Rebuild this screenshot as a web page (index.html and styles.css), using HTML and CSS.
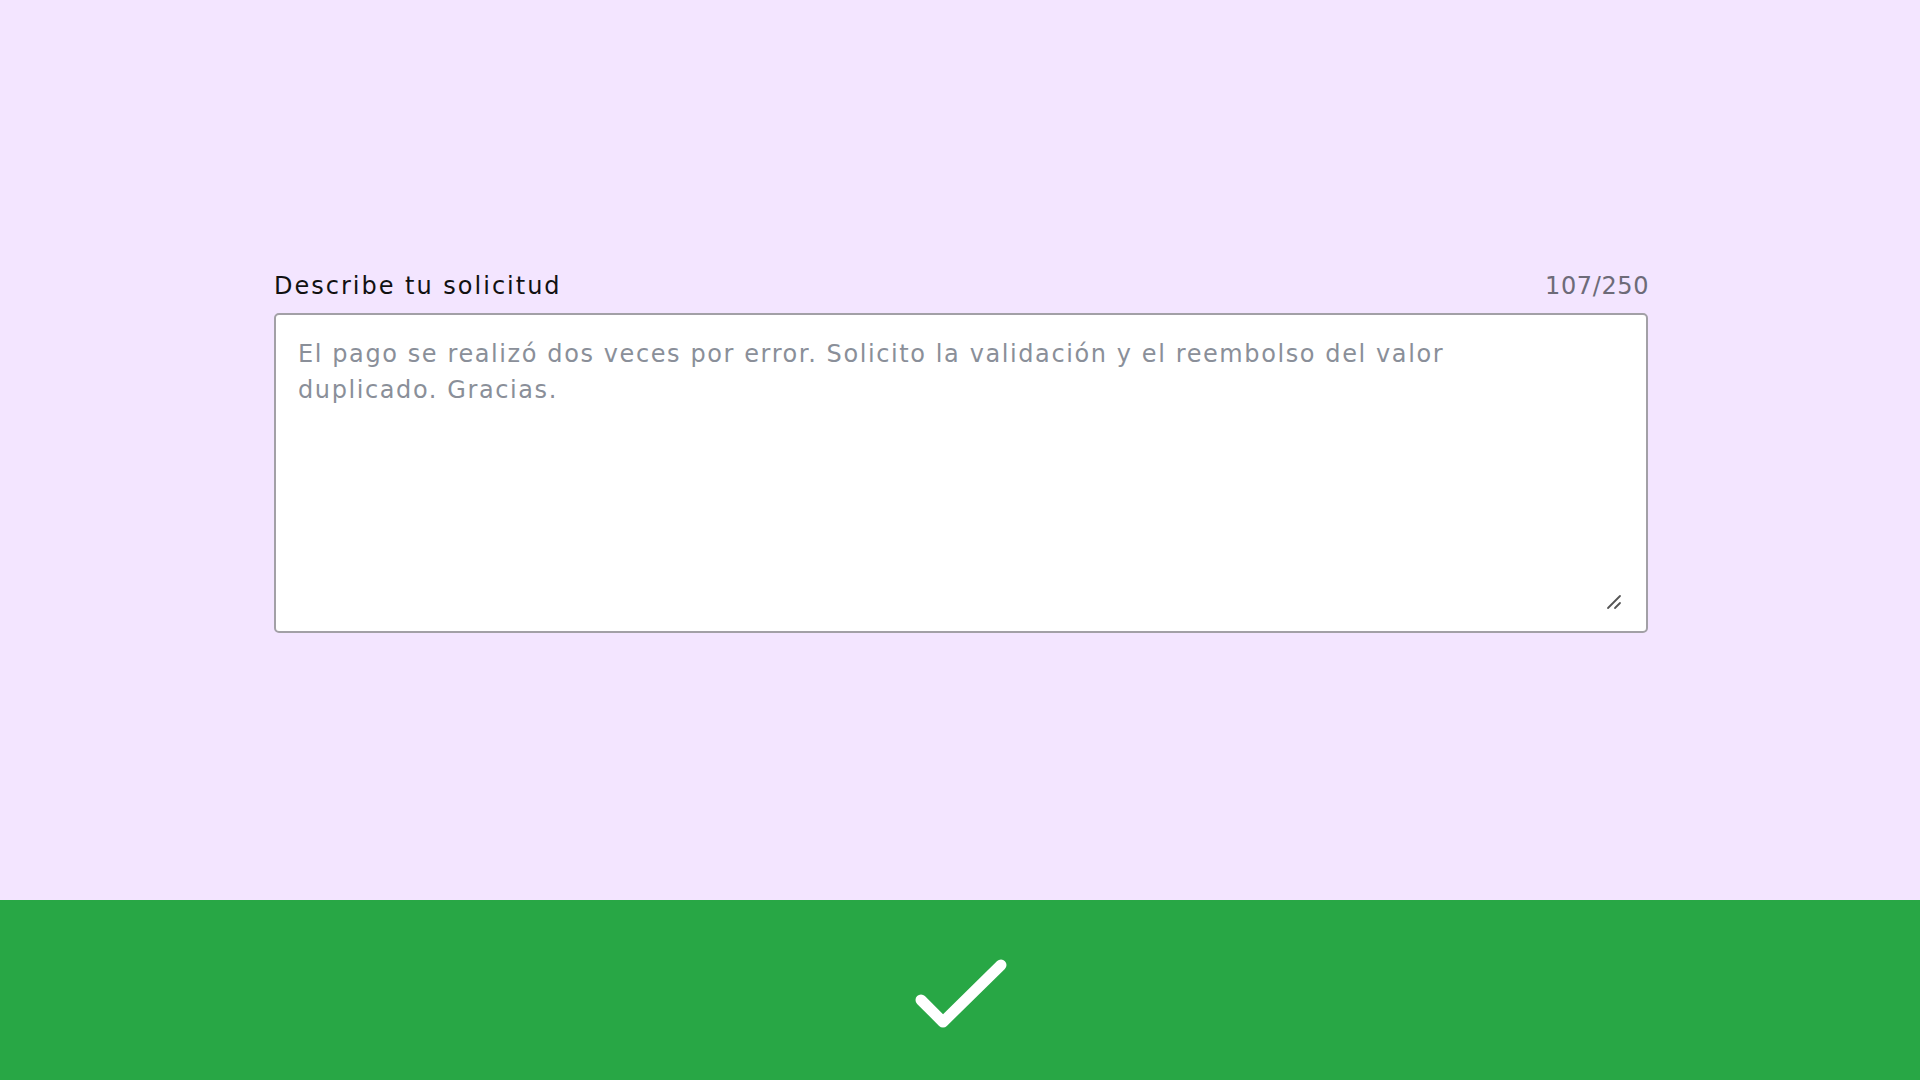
FILE: index.html
```html
<!DOCTYPE html>
<html lang="es">
<head>
<meta charset="utf-8">
<title>Describe tu solicitud</title>
<link rel="stylesheet" href="styles.css">
</head>
<body>
<div class="page">
  <main class="content">
    <div class="field">
      <div class="field-head">
        <label class="label" for="req">Describe tu solicitud</label>
        <span class="counter">107/250</span>
      </div>
      <div class="box">
        <textarea id="req" class="input" placeholder="El pago se realizó dos veces por error. Solicito la validación y el reembolso del valor&#10;duplicado. Gracias."></textarea>
        <svg class="grip" width="16" height="16" viewBox="0 0 16 16" aria-hidden="true">
          <path d="M2 14 L14 2 M9 14 L14 9" stroke="#555" stroke-width="1.8" stroke-linecap="round" fill="none"/>
        </svg>
      </div>
    </div>
  </main>
  <footer class="footer">
    <svg class="check" width="100" height="77" viewBox="0 0 100 77" aria-hidden="true">
      <polyline points="11,45 33,67 91,10" stroke="#fff" stroke-width="11" stroke-linecap="round" stroke-linejoin="round" fill="none"/>
    </svg>
  </footer>
</div>
</body>
</html>
```
FILE: styles.css
```css
html,body{margin:0;padding:0;}
body{
  background:#f3e5ff;
  font-family:"DejaVu Sans",sans-serif;
}
.page{
  height:1080px;
  display:flex;
  flex-direction:column;
}
.content{
  flex:1;
  display:flex;
  align-items:center;
  justify-content:center;
  padding:0 0 0 2px;
}
.field{
  width:1374px;
  display:flex;
  flex-direction:column;
  gap:9px;
}
.field-head{
  display:flex;
  justify-content:space-between;
  align-items:baseline;
  line-height:36px;
}
.label{
  font-size:24px;
  color:#111;
  letter-spacing:2px;
}
.counter{
  font-size:24px;
  color:#6d6b78;
  letter-spacing:0.6px;
  margin-right:-1px;
}
.box{
  position:relative;
  display:flex;
}
.input{
  flex:1;
  height:320px;
  box-sizing:border-box;
  border:2px solid #a2a0a6;
  border-radius:5px;
  background:#fff;
  padding:21px 22px 20px;
  font-family:"DejaVu Sans",sans-serif;
  font-size:24px;
  line-height:36px;
  letter-spacing:1.6px;
  color:#333;
  resize:none;
  outline:none;
  margin:0;
}
.input::placeholder{
  color:#8a8f99;
  opacity:1;
}
.grip{
  position:absolute;
  right:26px;
  bottom:23px;
}
.footer{
  height:180px;
  background:#28a745;
  display:flex;
  align-items:center;
  justify-content:center;
}
.check{
  display:block;
  margin-top:7px;
}
```
